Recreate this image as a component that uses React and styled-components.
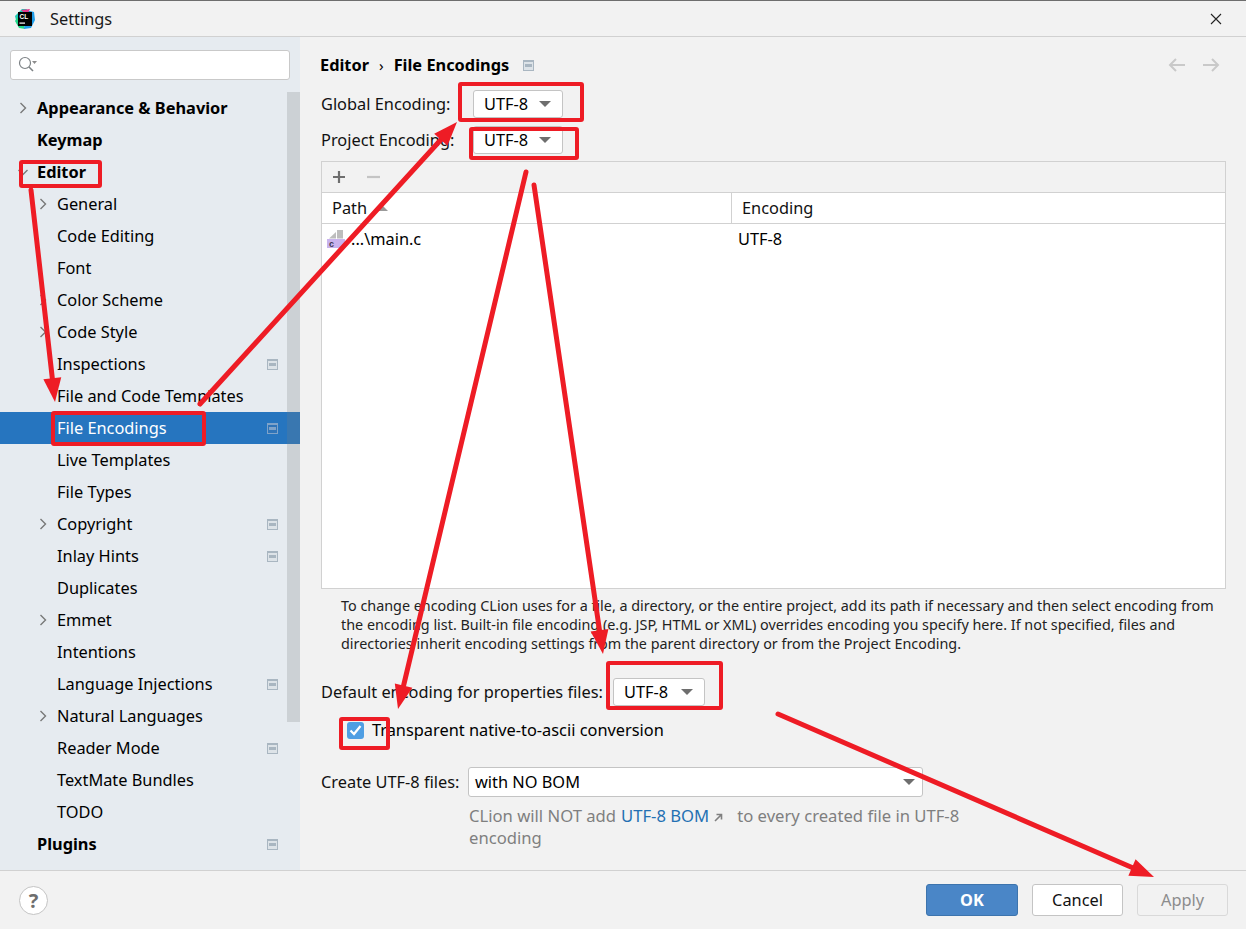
import React from "react";
import styled, { createGlobalStyle } from "styled-components";

const Global = createGlobalStyle`
  html, body { margin: 0; padding: 0; background: #f2f2f2; }
  body { font-family: "Noto Sans", "Open Sans", sans-serif; font-size: 16.35px; color: #000; overflow: hidden; }
  * { box-sizing: border-box; }
`;

const Win = styled.div`
  position: relative; width: 1246px; height: 929px; display: flex; flex-direction: column;
  background: #f2f2f2; border-top: 1px solid #6e6e6e; overflow: hidden;
`;
const TitleBar = styled.header`
  height: 36px; flex: none; display: flex; align-items: center; padding: 0 24px 0 15px;
  border-bottom: 1px solid #d1d1d1; gap: 15px;
`;
const TitleText = styled.span`flex: 1; color: #1a1a1a;`;
const Body = styled.div`flex: 1; min-height: 0; display: flex;`;
const Sidebar = styled.aside`
  position: relative; width: 300px; flex: none; background: #e6ebf0; overflow: hidden;
  display: flex; flex-direction: column; padding-top: 13px;
`;
const SearchBox = styled.div`
  margin: 0 10px 12px; height: 30px; flex: none; background: #fff; border: 1px solid #c9c9c9;
  border-radius: 3px; display: flex; align-items: center; padding-left: 7px;
`;
const Row = styled.div`
  height: 32px; flex: none; display: flex; align-items: center; position: relative;
  padding-left: ${p => p.$depth ? 57 : 37}px; padding-right: 22px;
  background: ${p => p.$selected ? "#2675bf" : "transparent"};
  color: ${p => p.$selected ? "#fff" : "#000"};
  font-weight: ${p => p.$depth ? 400 : 700};
`;
const RowLabel = styled.span`flex: 1; white-space: nowrap;`;
const ChevronSlot = styled.span`
  position: absolute; left: ${p => p.$depth ? 37 : 17}px; top: 10px; width: 12px; height: 12px; display: flex;
`;
const Scrollbar = styled.div`
  position: absolute; right: 0; top: 55px; width: 13px; height: 630px; background: rgba(120,125,130,.24);
`;
const Main = styled.main`flex: 1; min-width: 0; display: flex; flex-direction: column; padding: 0 20px 0 21px;`;
const Crumbs = styled.div`
  height: 49px; flex: none; display: flex; align-items: center; font-weight: 700; margin-left: -1px; padding-top: 7px;
`;
const CrumbSep = styled.span`margin: 0 10px; font-weight: 400; font-size: 15px;`;
const CrumbIcon = styled.span`display: flex; margin-left: 14px;`;
const NavArrows = styled.div`margin-left: auto; display: flex; gap: 18px; margin-right: 6px;`;
const FieldRow = styled.div`
  height: ${p => p.$h || 36}px; flex: none; display: flex; align-items: center; margin-top: ${p => p.$mt || 0}px;
`;
const FieldLabel = styled.label`width: ${p => p.$w}px; flex: none; white-space: nowrap; color: #111;`;
const Combo = styled.div`
  width: ${p => p.$w || 90}px; height: ${p => p.$ht || 28}px; flex: none; background: #fff; border: 1px solid #c4c4c4; border-radius: 3px;
  display: flex; align-items: center; justify-content: space-between; padding: 0 ${p => p.$pr || 11}px 0 ${p => p.$pl || 10}px;
`;
const Caret = styled.span`
  width: 0; height: 0; border-left: 6px solid transparent; border-right: 6px solid transparent;
  border-top: 6px solid #6e6e6e;
`;
const SortCaret = styled(Caret)`
  transform: rotate(180deg); border-top-color: #9a9a9a;
`;
const Table = styled.section`
  height: 428px; flex: none; margin-top: 3px; background: #fff; border: 1px solid #d1d1d1; display: flex; flex-direction: column;
`;
const TableTools = styled.div`
  height: 31px; flex: none; background: #f2f2f2; border-bottom: 1px solid #d1d1d1; display: flex; align-items: center; gap: 19px; padding-left: 10px;
`;
const TableHead = styled.div`
  height: 31px; flex: none; border-bottom: 1px solid #d1d1d1; display: grid; grid-template-columns: 410px 1fr; align-items: stretch;
`;
const HeadCell = styled.div`
  display: flex; align-items: center; gap: 9px; padding-left: ${p => p.$pl}px; color: #111;
  border-right: ${p => p.$div ? "1px solid #d1d1d1" : "none"};
`;
const TableRow = styled.div`height: 29px; display: grid; grid-template-columns: 416px 1fr; align-items: center;`;
const PathCell = styled.div`display: flex; align-items: center; gap: 5px; padding-left: 5px;`;
const Desc = styled.p`
  margin: 7px 0 0; padding-left: 20px; font-size: 14.37px; line-height: 19px; height: 58px; flex: none; color: #222; white-space: nowrap;
`;
const CheckRow = styled.div`height: 32px; flex: none; display: flex; align-items: center; gap: 8px; padding-left: 26px; margin-top: 4px;`;
const Check = styled.span`
  width: 17px; height: 17px; border-radius: 3px; background: #4f9ee3; display: flex; align-items: center; justify-content: center;
`;
const Hint = styled.div`margin: 7px 0 0 148px; width: 500px; line-height: 22px; color: #7f7f7f; font-size: 16.65px;`;
const HintLine = styled.div`display: flex; align-items: center; white-space: nowrap;`;
const Link = styled.span`color: #2470b3; margin-left: 5px;`;
const External = styled.span`display: flex; margin: 2px 14px 0 5px;`;
const Footer = styled.footer`
  height: 59px; flex: none; border-top: 1px solid #d1d1d1; display: flex; align-items: center; padding: 0 18px 0 19px; background: #f2f2f2;
  position: relative; z-index: 1;
`;
const Help = styled.div`
  width: 29px; height: 29px; border-radius: 50%; background: #fff; border: 1px solid #c4c4c4; display: flex; align-items: center; justify-content: center;
  font-weight: 700; color: #6e6e6e; font-size: 20px;
`;
const Buttons = styled.div`margin-left: auto; display: flex; gap: 14px;`;
const Btn = styled.button`
  width: ${p => p.$w}px; height: 32px; font: inherit; padding: 0; border-radius: 3px;
  background: ${p => p.$primary ? "#4a86c7" : p.$disabled ? "#f2f2f2" : "#fff"};
  border: 1.5px solid ${p => p.$primary ? "#3d74ad" : p.$disabled ? "#d9d9d9" : "#c4c4c4"};
  color: ${p => p.$primary ? "#fff" : p.$disabled ? "#8c8c8c" : "#111"};
  font-weight: ${p => p.$primary ? 700 : 400};
`;
const Overlay = styled.svg`position: absolute; left: 0; top: -1px; z-index: 5; pointer-events: none;`;
const FlipSvg = styled.svg`transform: ${p => p.$flip ? "scaleX(-1)" : "none"};`;

const Chevron = ({ down }) => (
  <svg width="12" height="12" viewBox="0 0 12 12" fill="none" stroke="#787878" strokeWidth="1.4">
    {down ? <path d="M1.5 4l4.5 4.5L10.5 4" /> : <path d="M3.5 1l5 5-5 5" />}
  </svg>
);
const ProjIcon = ({ selected }) => (
  <svg width="11" height="11" viewBox="0 0 11 11">
    <rect width="11" height="11" fill={selected ? "#7fa3c9" : "#a9b6c1"} />
    <rect x="1" y="2" width="9" height="8" fill={selected ? "#2f74b8" : "#dde3e8"} />
    <rect x="2" y="4" width="7" height="3" fill={selected ? "#7fa3c9" : "#a9b6c1"} />
  </svg>
);
const Logo = () => (
  <svg width="20" height="20" viewBox="0 0 20 20">
    <path d="M0 7L7 0h5L5 17 2 15z" fill="#1fc9b4" />
    <path d="M0 12l5-8 5 16-6-1z" fill="#21d789" />
    <path d="M11 1l8 2 1 8-4 8-7 1z" fill="#1f9de8" />
    <path d="M6 1l9-1-3 6z" fill="#e6398f" />
    <rect x="3" y="3" width="14" height="14" fill="#000" />
    <text x="4.5" y="9.5" fontSize="6.5" fontWeight="700" fill="#fff" fontFamily="Liberation Sans">CL</text>
    <rect x="4.5" y="13.5" width="5.5" height="1.2" fill="#fff" />
  </svg>
);
const SearchIcon = () => (
  <svg width="20" height="18" viewBox="0 0 20 18" fill="none">
    <circle cx="7" cy="7" r="5.5" stroke="#7d8285" strokeWidth="1.2" />
    <path d="M11 11l4 4" stroke="#7d8285" strokeWidth="1.6" />
    <path d="M14 5h5l-2.5 3z" fill="#8c8c8c" />
  </svg>
);
const CloseIcon = () => (
  <svg width="12" height="12" viewBox="0 0 12 12" stroke="#222" strokeWidth="1.1"><path d="M1 1l10 10M11 1L1 11" /></svg>
);
const NavArrow = ({ flip }) => (
  <FlipSvg $flip={flip} width="17" height="14" viewBox="0 0 17 14" fill="none" stroke="#c9c9c9" strokeWidth="2">
    <path d="M17 7H2M8 1L2 7l6 6" />
  </FlipSvg>
);
const FileC = () => (
  <svg width="19" height="19" viewBox="0 0 19 19">
    <path d="M2 9.5L9 3v6.5zM10 1h6v8.5h-6z" fill="#bdbdbd" />
    <rect x="0" y="10" width="18" height="9" fill="#c9b3ee" />
    <text x="2" y="17.5" fontSize="9" fontWeight="700" fill="#3f3a55" fontFamily="Liberation Sans">c</text>
  </svg>
);
const PlusMinus = () => (
  <>
    <svg width="14" height="14" viewBox="0 0 14 14" stroke="#6e6e6e" strokeWidth="2.2"><path d="M7 1v12M1 7h12" /></svg>
    <svg width="18" height="14" viewBox="0 0 18 14" stroke="#c4c4c4" strokeWidth="2.2"><path d="M2 7h13" /></svg>
  </>
);

const tree = [
  ["Appearance & Behavior", 0, "r"],
  ["Keymap", 0],
  ["Editor", 0, "d"],
  ["General", 1, "r"],
  ["Code Editing", 1],
  ["Font", 1],
  ["Color Scheme", 1, "r"],
  ["Code Style", 1, "r"],
  ["Inspections", 1, null, true],
  ["File and Code Templates", 1],
  ["File Encodings", 1, null, true, true],
  ["Live Templates", 1],
  ["File Types", 1],
  ["Copyright", 1, "r", true],
  ["Inlay Hints", 1, null, true],
  ["Duplicates", 1],
  ["Emmet", 1, "r"],
  ["Intentions", 1],
  ["Language Injections", 1, null, true],
  ["Natural Languages", 1, "r"],
  ["Reader Mode", 1, null, true],
  ["TextMate Bundles", 1],
  ["TODO", 1],
  ["Plugins", 0, null, true],
  ["Version Control", 0, "r", true],
];

const RED = "#ee1c25";
const boxes = [
  [460, 84, 122, 36], [471, 129, 106, 29], [21, 162, 79, 24], [53, 413, 151, 31],
  [608, 663, 113, 45], [341, 719, 47, 29],
];
const arrows = [
  [31, 190, 55, 402], [200, 404, 457, 122], [526, 172, 398, 709], [534, 185, 603, 654], [778, 714, 1154, 877],
];
const head = ([x1, y1, x2, y2]) => {
  const a = Math.atan2(y2 - y1, x2 - x1), L = 24, W = 9;
  const bx = x2 - L * Math.cos(a), by = y2 - L * Math.sin(a);
  const nx = -Math.sin(a) * W, ny = Math.cos(a) * W;
  return { pts: `${x2},${y2} ${bx + nx},${by + ny} ${bx - nx},${by - ny}`, bx, by };
};

export default function App() {
  return (
    <>
      <Global />
      <Win>
        <TitleBar>
          <Logo />
          <TitleText>Settings</TitleText>
          <CloseIcon />
        </TitleBar>
        <Body>
          <Sidebar>
            <SearchBox><SearchIcon /></SearchBox>
            {tree.map(([name, depth, chev, icon, sel]) => (
              <Row key={name} $depth={depth} $selected={sel}>
                {chev && <ChevronSlot $depth={depth}><Chevron down={chev === "d"} /></ChevronSlot>}
                <RowLabel>{name}</RowLabel>
                {icon && <ProjIcon selected={sel} />}
              </Row>
            ))}
            <Scrollbar />
          </Sidebar>
          <Main>
            <Crumbs>
              Editor<CrumbSep>›</CrumbSep>File Encodings
              <CrumbIcon><ProjIcon /></CrumbIcon>
              <NavArrows><NavArrow /><NavArrow flip /></NavArrows>
            </Crumbs>
            <FieldRow>
              <FieldLabel $w={152}>Global Encoding:</FieldLabel>
              <Combo>UTF-8<Caret /></Combo>
            </FieldRow>
            <FieldRow>
              <FieldLabel $w={152}>Project Encoding:</FieldLabel>
              <Combo>UTF-8<Caret /></Combo>
            </FieldRow>
            <Table>
              <TableTools><PlusMinus /></TableTools>
              <TableHead>
                <HeadCell $pl={10} $div>Path<SortCaret /></HeadCell>
                <HeadCell $pl={10}>Encoding</HeadCell>
              </TableHead>
              <TableRow>
                <PathCell><FileC /><span>...\main.c</span></PathCell>
                <span>UTF-8</span>
              </TableRow>
            </Table>
            <Desc>
              To change encoding CLion uses for a file, a directory, or the entire project, add its path if necessary and then select encoding from<br />
              the encoding list. Built-in file encoding (e.g. JSP, HTML or XML) overrides encoding you specify here. If not specified, files and<br />
              directories inherit encoding settings from the parent directory or from the Project Encoding.
            </Desc>
            <FieldRow $mt={20}>
              <FieldLabel $w={292}>Default encoding for properties files:</FieldLabel>
              <Combo $w={92}>UTF-8<Caret /></Combo>
            </FieldRow>
            <CheckRow>
              <Check>
                <svg width="13" height="11" viewBox="0 0 13 11" fill="none" stroke="#fff" strokeWidth="2.2"><path d="M1.5 5.5l3.5 3.5 6.5-8" /></svg>
              </Check>
              <span>Transparent native-to-ascii conversion</span>
            </CheckRow>
            <FieldRow $mt={20} $h={32}>
              <FieldLabel $w={147}>Create UTF-8 files:</FieldLabel>
              <Combo $w={455} $ht={30} $pl={6} $pr={7}>with NO BOM<Caret /></Combo>
            </FieldRow>
            <Hint>
              <HintLine>
                <span>CLion will NOT add</span>
                <Link>UTF-8 BOM</Link>
                <External>
                  <svg width="9" height="9" viewBox="0 0 9 9" fill="none" stroke="#808080" strokeWidth="1.6"><path d="M1 8l6-6M2.5 1.5H7.5V6.5" /></svg>
                </External>
                <span>to every created file in UTF-8</span>
              </HintLine>
              <div>encoding</div>
            </Hint>
          </Main>
        </Body>
        <Footer>
          <Help>?</Help>
          <Buttons>
            <Btn $w={92} $primary>OK</Btn>
            <Btn $w={91}>Cancel</Btn>
            <Btn $w={91} $disabled>Apply</Btn>
          </Buttons>
        </Footer>
        <Overlay width="1246" height="929" viewBox="0 0 1246 929">
          {boxes.map(([x, y, w, h]) => (
            <rect key={x} x={x} y={y} width={w} height={h} fill="none" stroke={RED} strokeWidth="4" rx="1" />
          ))}
          {arrows.map(a => {
            const h = head(a);
            return (
              <g key={a[0]}>
                <line x1={a[0]} y1={a[1]} x2={h.bx} y2={h.by} stroke={RED} strokeWidth="5" strokeLinecap="round" />
                <polygon points={h.pts} fill={RED} />
              </g>
            );
          })}
        </Overlay>
      </Win>
    </>
  );
}
